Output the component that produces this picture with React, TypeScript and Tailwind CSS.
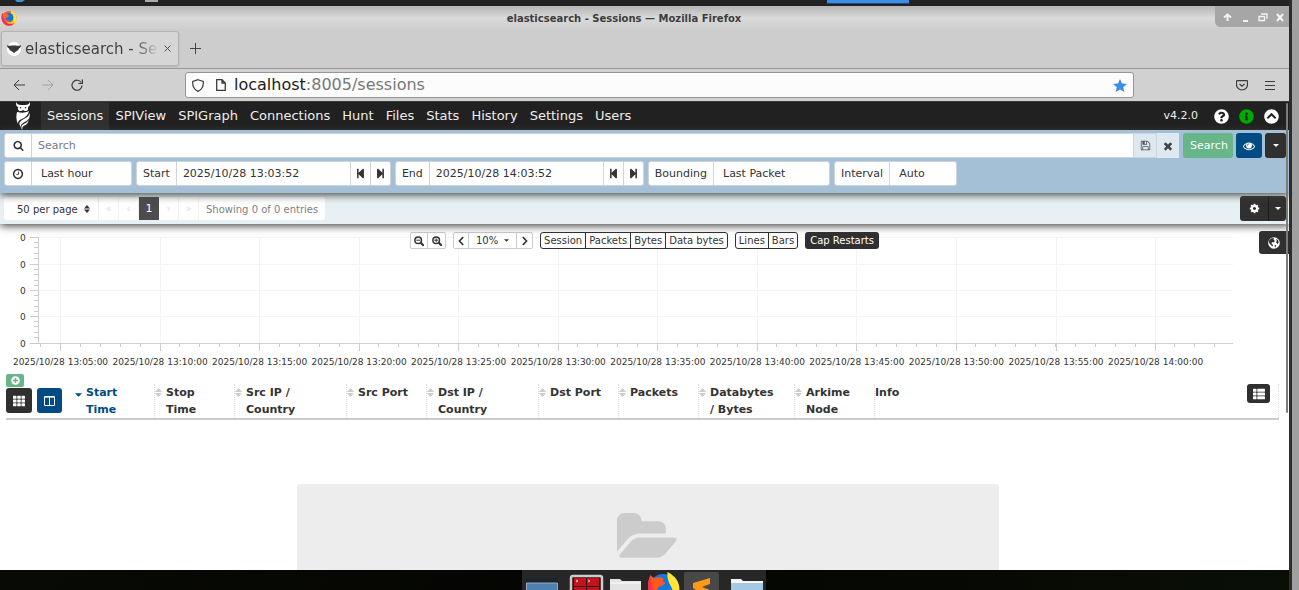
import type { ReactNode } from 'react';
import { FaChevronCircleUp, FaChevronLeft, FaChevronRight, FaInfoCircle, FaPlusCircle, FaQuestionCircle, FaStepBackward, FaStepForward, FaTh, FaThList } from 'react-icons/fa';

const paths = {
  search:
    'M1216 832q0-185-131.5-316.5t-316.5-131.5-316.5 131.5-131.5 316.5 131.5 316.5 316.5 131.5 316.5-131.5 131.5-316.5zm512 832q0 52-38 90t-90 38q-54 0-90-38l-343-342q-179 124-399 124-143 0-273.5-55.5t-225-150-150-225-55.5-273.5 55.5-273.5 150-225 225-150 273.5-55.5 273.5 55.5 225 150 150 225 55.5 273.5q0 220-124 399l343 343q37 37 37 90z',
  clock:
    'M1024 544v448q0 14-9 23t-23 9h-320q-14 0-23-9t-9-23v-64q0-14 9-23t23-9h224v-352q0-14 9-23t23-9h64q14 0 23 9t9 23zm416 352q0-148-73-273t-198-198-273-73-273 73-198 198-73 273 73 273 198 198 273 73 273-73 198-198 73-273zm224 0q0 209-103 385.5t-279.5 279.5-385.5 103-385.5-103-279.5-279.5-103-385.5 103-385.5 279.5-279.5 385.5-103 385.5 103 279.5 279.5 103 385.5z',
  eye: 'M1664 960q-152-236-381-353 61 104 61 225 0 185-131.5 316.5t-316.5 131.5-316.5-131.5-131.5-316.5q0-121 61-225-229 117-381 353 133 205 333.5 326.5t434.5 121.5 434.5-121.5 333.5-326.5zm-720-384q0-20-14-34t-34-14q-125 0-214.5 89.5t-89.5 214.5q0 20 14 34t34 14 34-14 14-34q0-86 61-147t147-61q20 0 34-14t14-34zm848 384q0 34-20 69-140 230-376.5 368.5t-499.5 138.5-499.5-139-376.5-368q-20-35-20-69t20-69q140-229 376.5-368t499.5-139 499.5 139 376.5 368q20 35 20 69z',
  cog: 'M1152 896q0-106-75-181t-181-75-181 75-75 181 75 181 181 75 181-75 75-181zm512-109v222q0 12-8 23t-20 13l-185 28q-19 54-39 91 35 50 107 138 10 12 10 25t-9 23q-27 37-99 108t-94 71q-12 0-26-9l-138-108q-44 23-91 38-16 136-29 186-7 28-36 28h-222q-14 0-24.5-8.5t-11.5-21.5l-28-184q-49-16-90-37l-141 107q-10 9-25 9-14 0-25-11-126-114-165-168-7-10-7-23 0-12 8-23 15-21 51-66.5t54-70.5q-27-50-41-99l-183-27q-13-2-21-12.5t-8-23.5v-222q0-12 8-23t19-13l186-28q14-46 39-92-40-57-107-138-10-12-10-24 0-10 9-23 26-36 98.5-107.5t94.5-71.5q13 0 26 10l138 107q44-23 91-38 16-136 29-186 7-28 36-28h222q14 0 24.5 8.5t11.5 21.5l28 184q49 16 90 37l142-107q9-9 24-9 13 0 25 10 129 119 165 170 7 8 7 22 0 12-8 23-15 21-51 66.5t-54 70.5q26 50 41 98l183 28q13 2 21 12.5t8 23.5z',
  save: 'M512 1536h768v-384h-768v384zm896 0h128v-896q0-14-10-38.5t-20-34.5l-281-281q-10-10-34-20t-39-10v416q0 40-28 68t-68 28h-576q-40 0-68-28t-28-68v-416h-128v1280h128v-416q0-40 28-68t68-28h832q40 0 68 28t28 68v416zm-384-928v-320q0-13-9.5-22.5t-22.5-9.5h-192q-13 0-22.5 9.5t-9.5 22.5v320q0 13 9.5 22.5t22.5 9.5h192q13 0 22.5-9.5t9.5-22.5zm640 32v928q0 40-28 68t-68 28h-1344q-40 0-68-28t-28-68v-1344q0-40 28-68t68-28h928q40 0 88 20t76 48l280 280q28 28 48 76t20 88z',
  close:
    'M1490 1322q0 40-28 68l-136 136q-28 28-68 28t-68-28l-294-294-294 294q-28 28-68 28t-68-28l-136-136q-28-28-28-68t28-68l294-294-294-294q-28-28-28-68t28-68l136-136q28-28 68-28t68 28l294 294 294-294q28-28 68-28t68 28l136 136q28 28 28 68t-28 68l-294 294 294 294q28 28 28 68z',
  folder:
    'M1879 952q0 31-31 66l-336 396q-43 51-120.5 86.5t-143.5 35.5h-1088q-34 0-60.5-13t-26.5-43q0-31 31-66l336-396q43-51 120.5-86.5t143.5-35.5h1088q34 0 60.5 13t26.5 43zm-343-344v160h-832q-94 0-197 47.5t-164 119.5l-337 396-5 6q0-4-.5-12.5t-.5-12.5v-960q0-92 66-158t158-66h320q92 0 158 66t66 158v32h544q92 0 158 66t66 158z',
};

function Icon({ name, className }: { name: keyof typeof paths; className: string }) {
  return (
    <svg viewBox={name === 'folder' ? '0 0 1920 1792' : '0 0 1792 1792'} className={className} fill="currentColor">
      <path d={paths[name]} />
    </svg>
  );
}

function Caret({ className }: { className: string }) {
  return (
    <svg viewBox="0 0 8 4" className={className} fill="currentColor">
      <path d="M0 0h8L4 4z" />
    </svg>
  );
}

function ZoomIcon({ plus }: { plus?: boolean }) {
  return (
    <svg viewBox="0 0 10 10" className="h-[10px] w-[10px]" fill="none" stroke="currentColor">
      <circle cx="4.2" cy="4.2" r="3.3" strokeWidth="1.5" />
      <path d="M6.8 6.8 9.2 9.2" strokeWidth="2" strokeLinecap="round" />
      <path d={plus ? 'M2.3 4.2h3.8M4.2 2.3v3.8' : 'M2.3 4.2h3.8'} />
    </svg>
  );
}

function FirefoxLogo({ className }: { className: string }) {
  return (
    <svg viewBox="0 0 32 32" className={className}>
      <circle cx="16" cy="17" r="15" fill="#ff5a36" />
      <path d="M2 20A15 15 0 0 0 28 25c4-6 3-13-1-17l-4-6-3 8-5 15z" fill="#ffb51f" />
      <path d="M21 1c7 5 11 11 10 19-1 5-4 9-8 11 4-7 3-12-1-16-4-5-3-10-1-14z" fill="#ffe536" />
      <circle cx="16" cy="15" r="9" fill="#1673dd" />
      <path d="M3 6 8 9l5-1 3 4-3 3-4 1c0 4 4 6 9 4-3 6-12 6-15 0C1 15 1 10 3 6z" fill="#ff6a1b" />
      <path d="M1 14c0 11 7 17 15 17 6 0 9-2 12-5-9 4-18 1-21-6C4 15 3 10 3 6 1 8 1 11 1 14z" fill="#ee2a66" />
    </svg>
  );
}

function OwlLogo() {
  return (
    <svg viewBox="0 0 18 28" className="h-[28px] w-[18px]" fill="#fff">
      <path d="M2 0c1 2 2 3 5 3h4c3 0 4-1 5-3 0 3 0 4-2 5v2c0 2-3 3-5 1-2 2-5 1-5-1V5C2 4 2 3 2 0z" />
      <circle cx="6.5" cy="5.8" r=".8" fill="#212121" />
      <circle cx="11.5" cy="5.8" r=".8" fill="#212121" />
      <path d="M3 10c5 1 8 1 12-1-1 4-3 6-7 8-3 1-4 2-4 5-2-4-2-8-1-12z" />
      <path d="M15.600 11c.8 5-1 7-5 9-3 1.500-4 3-3.600 5-3-3-1.400-6 2-7.500 4-2 6-3.500 6.600-6.500z" />
      <path d="M14.600 18c-.2 3-2 4.500-4 5.500-2 1-2.500 2-2.300 4.500-1.600-1.500-1.500-4 .7-5.500 2.200-1.300 4.400-2 5.600-4.500z" />
    </svg>
  );
}

const navItems = ['Sessions', 'SPIView', 'SPIGraph', 'Connections', 'Hunt', 'Files', 'Stats', 'History', 'Settings', 'Users'];

const columns = [
  { lines: ['Start', 'Time'], width: 'w-[80px]', active: true },
  { lines: ['Stop', 'Time'], width: 'w-[80px]' },
  { lines: ['Src IP /', 'Country'], width: 'w-[112px]' },
  { lines: ['Src Port'], width: 'w-[80px]' },
  { lines: ['Dst IP /', 'Country'], width: 'w-[112px]' },
  { lines: ['Dst Port'], width: 'w-[80px]' },
  { lines: ['Packets'], width: 'w-[80px]' },
  { lines: ['Databytes', '/ Bytes'], width: 'w-[96px]' },
  { lines: ['Arkime', 'Node'], width: 'w-[80px]' },
];

const timeLabels = ['13:05', '13:10', '13:15', '13:20', '13:25', '13:30', '13:35', '13:40', '13:45', '13:50', '13:55', '14:00'];

function TitleBar() {
  return (
    <div className="flex h-6 items-center bg-linear-to-b from-[#b5b5b5] via-[#dadada] to-[#cdcdcd]">
      <FirefoxLogo className="ml-px h-4 w-4 shrink-0" />
      <h1 className="flex-1 pl-4 text-center text-[10px] font-bold text-[#3c3c3c]">elasticsearch - Sessions — Mozilla Firefox</h1>
      <div className="flex h-full w-[74px] items-start">
        <svg viewBox="0 0 74 21" className="h-[21px] w-[74px]" fill="none" stroke="#f4f4f4" strokeWidth="2">
          <path d="M0 0h74v21H6q-6 0-6-6z" fill="#a6a6a6" stroke="none" />
          <path d="M12.500 15V9M9 11.500l3.500-3 3.500 3M28 15h5" />
          <path d="M44 10.500h5.500v4H44zM46 8h6v5" strokeWidth="1.300" />
          <path d="m62 8 6 7m0-7-6 7" />
        </svg>
      </div>
    </div>
  );
}

function BrowserBars() {
  return (
    <>
      <div className="flex h-[39px] items-start border-b border-[#9b9b9b] bg-[#cdcdcd] pt-px">
        <div className="ml-px flex h-[35px] w-[178px] items-center rounded-[3px] border border-[#b3b3b3] bg-[#d6d6d6] pl-[5px] shadow-sm">
          <svg viewBox="0 0 14 14" className="mr-1 h-[14px] w-[14px] shrink-0">
            <circle cx="7" cy="7" r="7" fill="#fff" />
            <path d="M0 3c2 1 4 1 5 .500h4c1 .500 3 .500 5-.500 0 2-1 3-2 3.500-.5 2-2 2.500-3 3L7 11l-2-1.500c-1-.500-2.500-1-3-3C1 6 0 5 0 3z" fill="#3a3a3a" />
          </svg>
          <span className="w-[134px] bg-linear-to-r from-[#3e3e3e] from-80% to-[#d6d6d6] bg-clip-text pt-px text-[15px] whitespace-nowrap text-transparent">
            elasticsearch - Se
          </span>
          <button aria-label="Close tab" className="w-4 text-[#555]">
            <svg viewBox="0 0 7 7" className="mx-auto h-[7px] w-[7px]" stroke="currentColor">
              <path d="m.5.500 6 6m0-6-6 6" />
            </svg>
          </button>
        </div>
        <button aria-label="New tab" className="ml-[11px] flex h-[35px] items-center text-[#444]">
          <svg viewBox="0 0 11 11" className="h-[11px] w-[11px]" stroke="currentColor">
            <path d="M5.500 0v11M0 5.500h11" />
          </svg>
        </button>
      </div>
      <div className="flex h-8 items-center bg-[#d1d1d1] text-[#3b3b3b]">
        <button aria-label="Back" className="ml-[13px]">
          <svg viewBox="0 0 12 12" className="h-3 w-3" fill="none" stroke="currentColor">
            <path d="M12 6H1m5-5L1 6l5 5" />
          </svg>
        </button>
        <button aria-label="Forward" className="ml-[17px] text-[#a2a2a2]">
          <svg viewBox="0 0 12 12" className="h-3 w-3" fill="none" stroke="currentColor">
            <path d="M0 6h11M6 1l5 5-5 5" />
          </svg>
        </button>
        <button aria-label="Reload" className="ml-[17px]">
          <svg viewBox="0 0 12 12" className="h-3 w-3" fill="none" stroke="currentColor" strokeWidth="1.200">
            <path d="M10.200 3.500A5 5 0 1 0 11 6.500M11.400.500v4h-4" />
          </svg>
        </button>
        <div className="ml-[102px] flex h-[26px] flex-1 items-center rounded-[3px] border border-[#959595] bg-[#fcfcfc] px-[6px]">
          <svg viewBox="0 0 12 13" className="h-[13px] w-3" fill="none" stroke="currentColor" strokeWidth="1.200">
            <path d="M6 .700 11.300 2.500C11.600 7.500 9.500 11 6 12.400 2.500 11 .400 7.500.700 2.500z" />
          </svg>
          <svg viewBox="0 0 10 12" className="mr-2 ml-3 h-3 w-[10px]" fill="none" stroke="currentColor" strokeWidth="1.300">
            <path d="M.700.700H6L9.300 4v7.300H.700zM6 .700V4h3.300" />
          </svg>
          <p className="flex-1 text-[16px] text-[#777]">
            <span className="text-[#1c1c1c]">localhost</span>:8005/sessions
          </p>
          <svg viewBox="0 0 14 13" className="h-[13px] w-[14px]" fill="#3a8de8">
            <path d="m7 0 2 4.500 5 .500-3.800 3.200L11.400 13 7 10.500 2.600 13l1.200-4.800L0 5l5-.500z" />
          </svg>
        </div>
        <svg viewBox="0 0 12 11" className="ml-[102px] h-[11px] w-3" fill="none" stroke="currentColor">
          <path d="M1 .700h10q.500 0 .500.500v3.300a5.500 5.500 0 0 1-11 0V1.200Q.500.700 1 .700zM3.500 4 6 6.300 8.500 4" strokeWidth="1.200" />
        </svg>
        <button aria-label="Menu" className="mr-[14px] ml-[17px]">
          <svg viewBox="0 0 10 9" className="h-[9px] w-[10px]" stroke="currentColor">
            <path d="M0 .500h10M0 4.500h10M0 8.500h10" />
          </svg>
        </button>
      </div>
    </>
  );
}

function NavBar() {
  return (
    <nav className="flex h-[29px] items-center border-t border-[#3a3a3a] bg-[#212121] text-[13px] text-[#eee]">
      <a href="#home" aria-label="Home" className="mr-[9px] ml-[14px] w-[18px]">
        <OwlLogo />
      </a>
      {navItems.map((item, i) => (
        <a key={item} href={`#${item}`} className={i === 0 ? 'flex h-full items-center bg-[#303030] px-[6px]' : 'px-[6px]'}>
          {item}
        </a>
      ))}
      <span className="ml-auto pt-px text-[11px]">v4.2.0</span>
      <FaQuestionCircle className="ml-4 h-[15px] w-[15px] text-white" />
      <FaInfoCircle className="ml-[10px] h-[15px] w-[15px] text-[#00aa00]" />
      <FaChevronCircleUp className="mr-[10px] ml-[10px] h-[15px] w-[15px] text-white" />
    </nav>
  );
}

const field = 'h-[25px] border border-[#ced4da] bg-white text-[11px] text-[#333]';

function TimeField({ id, label, value, width }: { id: string; label: string; value: string; width: string }) {
  return (
    <div className="flex">
      <label htmlFor={id} className={`${field} flex items-center rounded-l-[3px] px-[6px] pt-px`}>
        {label}
      </label>
      <input id={id} defaultValue={value} className={`${field} ${width} border-l-0 px-[6px]`} />
      <button aria-label={`${label} back`} className={`${field} flex w-5 items-center justify-center border-l-0`}>
        <FaStepBackward className="h-[11px] w-[11px]" />
      </button>
      <button aria-label={`${label} forward`} className={`${field} flex w-5 items-center justify-center rounded-r-[3px] border-l-0`}>
        <FaStepForward className="h-[11px] w-[11px]" />
      </button>
    </div>
  );
}

function SelectField({ id, label, value, width }: { id: string; label: ReactNode; value: string; width: string }) {
  return (
    <div className="flex">
      <label htmlFor={id} className={`${field} flex items-center rounded-l-[3px] px-[6px] pt-px`}>
        {label}
      </label>
      <select id={id} className={`${field} ${width} appearance-none rounded-r-[3px] border-l-0 px-[9px] pt-px`}>
        <option>{value}</option>
      </select>
    </div>
  );
}

function SearchArea() {
  return (
    <form className="relative z-20 flex h-[63px] flex-col gap-[3px] bg-[#a3c0d6] pt-[3px] pl-1 shadow-[0_2px_8px_#444]">
      <div className="flex pr-[3px]">
        <label htmlFor="query" className={`${field} flex w-7 items-center justify-center rounded-l-[3px]`}>
          <Icon name="search" className="h-[11px] w-[11px]" />
        </label>
        <input id="query" placeholder="Search" className={`${field} min-w-0 flex-1 border-l-0 px-[6px] placeholder:text-[#757b80]`} />
        <button type="button" aria-label="Save" className="flex w-[23px] items-center justify-center border border-l-0 border-[#ced4da] bg-[#dee8f0] text-[#555]">
          <Icon name="save" className="h-[11px] w-[11px]" />
        </button>
        <button type="button" aria-label="Clear" className="flex w-[22px] items-center justify-center bg-[#dee8f0] text-[#444]">
          <Icon name="close" className="h-3 w-3" />
        </button>
        <button type="button" className="ml-1 h-[25px] w-[50px] rounded-[3px] bg-[#66b689] pt-px pl-[2px] text-[11px] text-white">
          Search
        </button>
        <button type="button" aria-label="View" className="ml-[3px] flex w-[26px] items-center justify-center rounded-[3px] bg-[#004b83] text-white">
          <Icon name="eye" className="h-3 w-3" />
        </button>
        <button type="button" aria-label="More" className="ml-[3px] flex w-[21px] items-center justify-center rounded-[3px] bg-[#303030] text-white">
          <Caret className="h-[3px] w-[6px]" />
        </button>
      </div>
      <div className="flex gap-1">
        <SelectField id="range" label={<Icon name="clock" className="mx-px h-3 w-3" />} value="Last hour" width="w-[100px]" />
        <TimeField id="start" label="Start" value="2025/10/28 13:03:52" width="w-[174px]" />
        <TimeField id="end" label="End" value="2025/10/28 14:03:52" width="w-[174px]" />
        <SelectField id="bounding" label="Bounding" value="Last Packet" width="w-[116px]" />
        <SelectField id="interval" label="Interval" value="Auto" width="w-[67px]" />
      </div>
    </form>
  );
}

function Pager() {
  const arrow = 'flex h-full w-[20px] items-center justify-center border-r border-[#f2f2f2] bg-white text-[#e0e0e0]';
  return (
    <div className="relative z-10 flex h-[31px] items-center bg-[#e7f1f3] pl-1 text-[10px] shadow-[0_2px_8px_#444]">
      <div className="flex h-[23px]">
        <div className="relative">
          <select aria-label="Page size" className="h-full w-[95px] appearance-none rounded-l-[3px] border-r border-[#eee] bg-white pt-px pr-[18px] pl-[13px] text-[#333]">
            <option>50 per page</option>
          </select>
          <svg viewBox="0 0 6 8" className="pointer-events-none absolute top-2 right-[9px] h-2 w-[6px]" fill="#333">
            <path d="M3 0l3 3.400H0zM3 8l3-3.400H0z" />
          </svg>
        </div>
        <button className={arrow}>«</button>
        <button className={arrow}>‹</button>
        <button className="h-full w-[20px] bg-[#4c4c4c] pt-px text-[11px] text-white">1</button>
        <button className={arrow}>›</button>
        <button className={arrow}>»</button>
        <span className="flex items-center rounded-r-[3px] bg-white px-[7px] pt-px text-[#808080]">Showing 0 of 0 entries</span>
      </div>
      <div className="mr-[3px] ml-auto flex h-[25px] text-white">
        <button aria-label="Actions" className="flex w-[29px] items-center justify-center rounded-l-[3px] border-r border-[#1c1c1c] bg-[#303030]">
          <Icon name="cog" className="h-[11px] w-[11px]" />
        </button>
        <button aria-label="More actions" className="flex w-[17px] items-center justify-center rounded-r-[3px] bg-[#303030]">
          <Caret className="h-[3px] w-[6px]" />
        </button>
      </div>
    </div>
  );
}

function ButtonGroup({ items }: { items: string[] }) {
  return (
    <div className="flex divide-x divide-[#303030] rounded-[3px] border border-[#303030] bg-white">
      {items.map((item) => (
        <button key={item} className="px-[3px]">
          {item}
        </button>
      ))}
    </div>
  );
}

function GraphButtons() {
  return (
    <div className="absolute inset-x-0 top-2 flex h-[17px] justify-center gap-[7px] text-[10px] leading-[15px] text-[#333]">
      <div className="flex divide-x divide-[#ccc] rounded-[2px] border border-[#ccc] bg-white">
        <button aria-label="Zoom out" className="flex w-[17px] items-center justify-center"><ZoomIcon /></button>
        <button aria-label="Zoom in" className="flex w-[17px] items-center justify-center"><ZoomIcon plus /></button>
      </div>
      <div className="flex divide-x divide-[#ccc] rounded-[2px] border border-[#ccc] bg-white">
        <button aria-label="Pan left" className="flex w-[15px] items-center justify-center"><FaChevronLeft className="h-[10px] w-[10px]" /></button>
        <button className="flex w-[48px] items-center justify-center gap-[6px]">
          10% <Caret className="h-[3px] w-[5px]" />
        </button>
        <button aria-label="Pan right" className="flex w-[15px] items-center justify-center"><FaChevronRight className="h-[10px] w-[10px]" /></button>
      </div>
      <ButtonGroup items={['Session', 'Packets', 'Bytes', 'Data bytes']} />
      <ButtonGroup items={['Lines', 'Bars']} />
      <button className="rounded-[3px] bg-[#303030] px-[5px] text-white">Cap Restarts</button>
    </div>
  );
}

function Timeline() {
  const rows = [13, 40, 66, 92, 119];
  return (
    <div className="relative">
      <svg className="h-[150px] w-full" stroke="#ccc" shapeRendering="crispEdges">
        {rows.map((y, i) => (
          <g key={y}>
            <path d={`M38 ${y}.5H1233`} stroke={i === 4 ? '#d0d0d0' : '#f4f4f4'} />
            <path d={`M30 ${y}.5h8`} />
            {i < 4 && <path d={`M34 ${y + 5}.5h4M34 ${y + 10}.5h4M34 ${y + 16}.5h4M34 ${y + 21}.5h4`} />}
            <text x="20" y={y + 4} className="fill-[#333] stroke-none text-[9px]">0</text>
          </g>
        ))}
        <path d="M38.500 13v106" />
        {Array.from({ length: 60 }, (_, i) => (
          <path key={i} d={`M${40.6 + i * 19.9} 119v4`} />
        ))}
        {timeLabels.map((t, i) => {
          const x = 60.5 + i * 99.55;
          return (
            <g key={t}>
              <path d={`M${x} 13v106`} stroke="#f4f4f4" />
              <path d={`M${x} 119v8`} />
              <text x={x} y="141" textAnchor="middle" className="fill-[#333] stroke-none text-[9px]">
                2025/10/28 {t}:00
              </text>
            </g>
          );
        })}
      </svg>
      <GraphButtons />
      <button aria-label="Map" className="absolute top-[7px] right-0 flex h-[23px] w-[30px] items-center justify-center rounded-l-[3px] bg-[#303030]">
        <svg viewBox="0 0 12 12" className="h-3 w-3">
          <circle cx="6" cy="6" r="5.800" fill="#fff" />
          <path d="M1 3.500 3 1.500 6 1l-.500 1.500L7 4 5.500 5.500 4 5l-.500 1.500L5 8 4.500 9.500 2.500 7.500 1.200 6zM8 2l2 1 .8 2.500L9.500 7 8 5.500 8.800 4zM6.500 8l2 .500L7 10.500z" fill="#303030" />
        </svg>
      </button>
    </div>
  );
}

function SessionsTable() {
  return (
    <div className="pr-[10px] pl-[6px]">
      <button aria-label="Add" className="flex h-[13px] w-[18px] items-center justify-center rounded-[2px] bg-[#66b689] text-white">
        <FaPlusCircle className="h-[9px] w-[9px]" />
      </button>
      <table className="w-full table-fixed border-b-2 border-[#ccc] text-left text-[11px] leading-[17px] text-[#333]">
        <thead>
          <tr className="align-top">
            <th className="w-[68px]">
              <div className="flex gap-[5px] pt-px">
                <button aria-label="Toggle columns" className="flex h-[25px] w-[26px] items-center justify-center rounded-[3px] bg-[#303030] text-white">
                  <FaTh className="h-3 w-3" />
                </button>
                <button aria-label="Column layout" className="flex h-[25px] w-[25px] items-center justify-center rounded-[3px] bg-[#004b83] text-white">
                  <svg viewBox="0 0 11 10" className="h-[10px] w-[11px]" fill="none" stroke="currentColor">
                    <path d="M.500.500h10v9H.500zM5.500 1v9M1 1.200h9" />
                  </svg>
                </button>
              </div>
            </th>
            {columns.map((col) => (
              <th key={col.lines[0]} className={col.width}>
                <div className={`-mt-[3px] flex gap-1 border-l border-dotted ${col.active ? 'border-transparent text-[#004b83]' : 'border-[#ddd]'}`}>
                  {col.active ? (
                    <Caret className="mt-[9px] h-[4px] w-[7px] shrink-0" />
                  ) : (
                    <svg viewBox="0 0 7 9" className="mt-1 h-[9px] w-[7px] shrink-0" fill="#ccc">
                      <path d="M3.500 0 7 4H0zM3.500 9 7 5H0z" />
                    </svg>
                  )}
                  <div className="min-h-[34px]">
                    {col.lines.map((line) => (
                      <div key={line}>{line}</div>
                    ))}
                  </div>
                </div>
              </th>
            ))}
            <th>
              <div className="-mt-[3px] flex min-h-[34px] items-start justify-between border-x border-dotted border-[#ddd] pr-2">
                Info
                <button aria-label="Info fields" className="flex h-[19px] w-[23px] items-center justify-center rounded-[3px] bg-[#303030] text-white">
                  <FaThList className="h-3 w-3" />
                </button>
              </div>
            </th>
          </tr>
        </thead>
      </table>
    </div>
  );
}

function Dock() {
  return (
    <div className="flex h-5 shrink-0 justify-center bg-linear-to-r from-[#080a06] via-[#040502] to-[#0a0f06] pr-[2px]">
      <div className="h-full w-[244px] bg-[#272727]">
        <svg viewBox="0 0 244 20" className="h-5 w-[244px]">
          <path d="M4 8h32v12H4z" fill="#1c252c" />
          <path d="M4.500 20v-7h31v7" fill="#4f81b0" stroke="#9ab" />
          <rect x="49" y="6" width="31" height="20" rx="2" fill="#311" stroke="#ccc" strokeWidth="2.500" />
          <path d="M52 8h12v8H52zM65 8h12v8H65zM52 17h12v3H52zM65 17h12v3H65z" fill="#c4141b" />
          <path d="m54 10 2 1-2 1m12-2 2 1-2 1" stroke="#fff" fill="none" strokeWidth=".7" />
          <path d="M88 20V9h10l2 2h19v9z" fill="#e4e4e4" />
          <path d="M88 13h31" stroke="#fff" />
          <rect x="162" y="2" width="35" height="20" rx="2" fill="#484848" />
          <path d="m171 13 17-5v6l-8 3 8 3h-14l-3-2z" fill="#ff9a18" />
          <path d="M209 20V9h10l2 2h20v9z" fill="#f3f6f8" />
          <path d="M209 13h32v7h-32z" fill="#a5c9e3" />
          <svg x="125" y="2" width="33" height="18" viewBox="0 0 32 18">
            <circle cx="16" cy="17" r="15" fill="#1976df" />
            <path d="M20 0c8 4 12 10 12 18h-7c-1-5-6-8-5-18z" fill="#ffe536" />
            <path d="M3 3c1 2 3 3 5 3 3-1 6-1 8 1l-1 2 3 2-4 3-3 1-1 3H1C0 12 1 7 3 3z" fill="#ff581d" />
            <path d="M3 3c0 5 0 10 4 15H1C0 12 1 7 3 3z" fill="#ff2f4d" />
          </svg>
        </svg>
      </div>
    </div>
  );
}

export default function App() {
  return (
    <div className="flex h-screen overflow-hidden bg-[#a0a0a0] font-['DejaVu_Sans',sans-serif]">
      <div className="flex min-w-0 flex-1 flex-col border-r-[3px] border-[#2c2c2c] bg-white">
        <div className="h-[6px] shrink-0 bg-[#222]">
          <svg viewBox="0 0 1289 6" className="h-[6px] w-full">
            <path d="M15 0h10l-3 2h-5z" fill="#3a94dd" />
            <path d="M145 0h13v2h-13z" fill="#aaa" />
            <path d="M827 0h82v3h-82z" fill="#3c8ee6" />
            <path d="M827 3h82v1h-82z" fill="#27466f" />
          </svg>
        </div>
        <TitleBar />
        <BrowserBars />
        <main className="relative min-h-0 flex-1 overflow-hidden">
          <NavBar />
          <SearchArea />
          <Pager />
          <Timeline />
          <SessionsTable />
          <div className="mt-16 pl-[6px]">
            <div className="mx-auto h-[150px] w-[702px] rounded-[3px] bg-[#ededed] pt-[25px] text-[#ccc]">
              <Icon name="folder" className="mx-auto h-[57px] w-[61px]" />
            </div>
          </div>
          <div className="absolute top-[2px] right-px z-30 h-[310px] w-[2px] rounded-full bg-[#7d7d78]" />
        </main>
        <Dock />
      </div>
      <div className="w-[7px] shrink-0" />
    </div>
  );
}
